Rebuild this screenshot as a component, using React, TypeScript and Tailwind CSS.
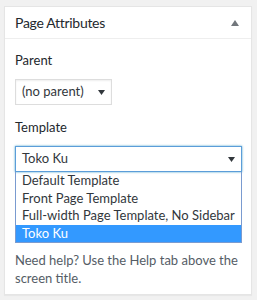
import React from "react";

const font = { fontFamily: 'Lato, "Open Sans", sans-serif' };

function Arrow() {
  return (
    <svg width="7" height="5" viewBox="0 0 7 5" className="block">
      <path d="M0 0 L7 0 L3.5 5 Z" fill="#32373c" />
    </svg>
  );
}

export default function App() {
  return (
    <div className="w-[257px] h-[300px] bg-[#f1f1f1] pt-[6px] pl-[4px] pr-[5px]" style={font}>
      <div className="bg-white border border-[#e5e5e5] h-[289px] shadow-[0_1px_1px_rgba(0,0,0,0.04)]">
        <div className="h-[32px] border-b border-[#eeeeee] flex items-center justify-between pl-[10px] pr-[12px]">
          <span className="text-[14px] tracking-[-0.3px] text-[#23282d] leading-none">Page Attributes</span>
          <svg width="8" height="6" viewBox="0 0 8 6" className="block">
            <path d="M4 0 L8 6 L0 6 Z" fill="#72777c" />
          </svg>
        </div>
        <div className="pl-[10px] pr-[9px] pt-[12px] text-[13px] text-[#444]">
          <div className="leading-[18px] text-[#23282d]">Parent</div>
          <div className="mt-[10px] w-[97px] h-[26px] border border-[#dddddd] shadow-[inset_0_1px_2px_rgba(0,0,0,0.07)] flex items-center justify-between pl-[6px] pr-[6px] text-[#32373c]">
            <span>(no parent)</span>
            <Arrow />
          </div>
          <div className="mt-[13px] leading-[18px] text-[#23282d]">Template</div>
          <div className="mt-[10px] w-[227px] h-[26px] border border-[#5b9dd9] shadow-[0_0_2px_rgba(30,140,190,0.8)] flex items-center justify-between pl-[6px] pr-[6px] text-[#32373c]">
            <span>Toko Ku</span>
            <Arrow />
          </div>
          <div className="w-[227px] border border-t-0 border-[#7a9bd0] text-[#32373c] leading-[17.5px] whitespace-nowrap">
            <div className="pl-[6px]">Default Template</div>
            <div className="pl-[6px]">Front Page Template</div>
            <div className="pl-[6px]">Full-width Page Template, No Sidebar</div>
            <div className="pl-[6px] bg-[#3399ff] text-white">Toko Ku</div>
          </div>
          <p className="mt-[9px] leading-[17.5px] text-[#555d66]">
            Need help? Use the Help tab above the screen title.
          </p>
        </div>
      </div>
    </div>
  );
}
